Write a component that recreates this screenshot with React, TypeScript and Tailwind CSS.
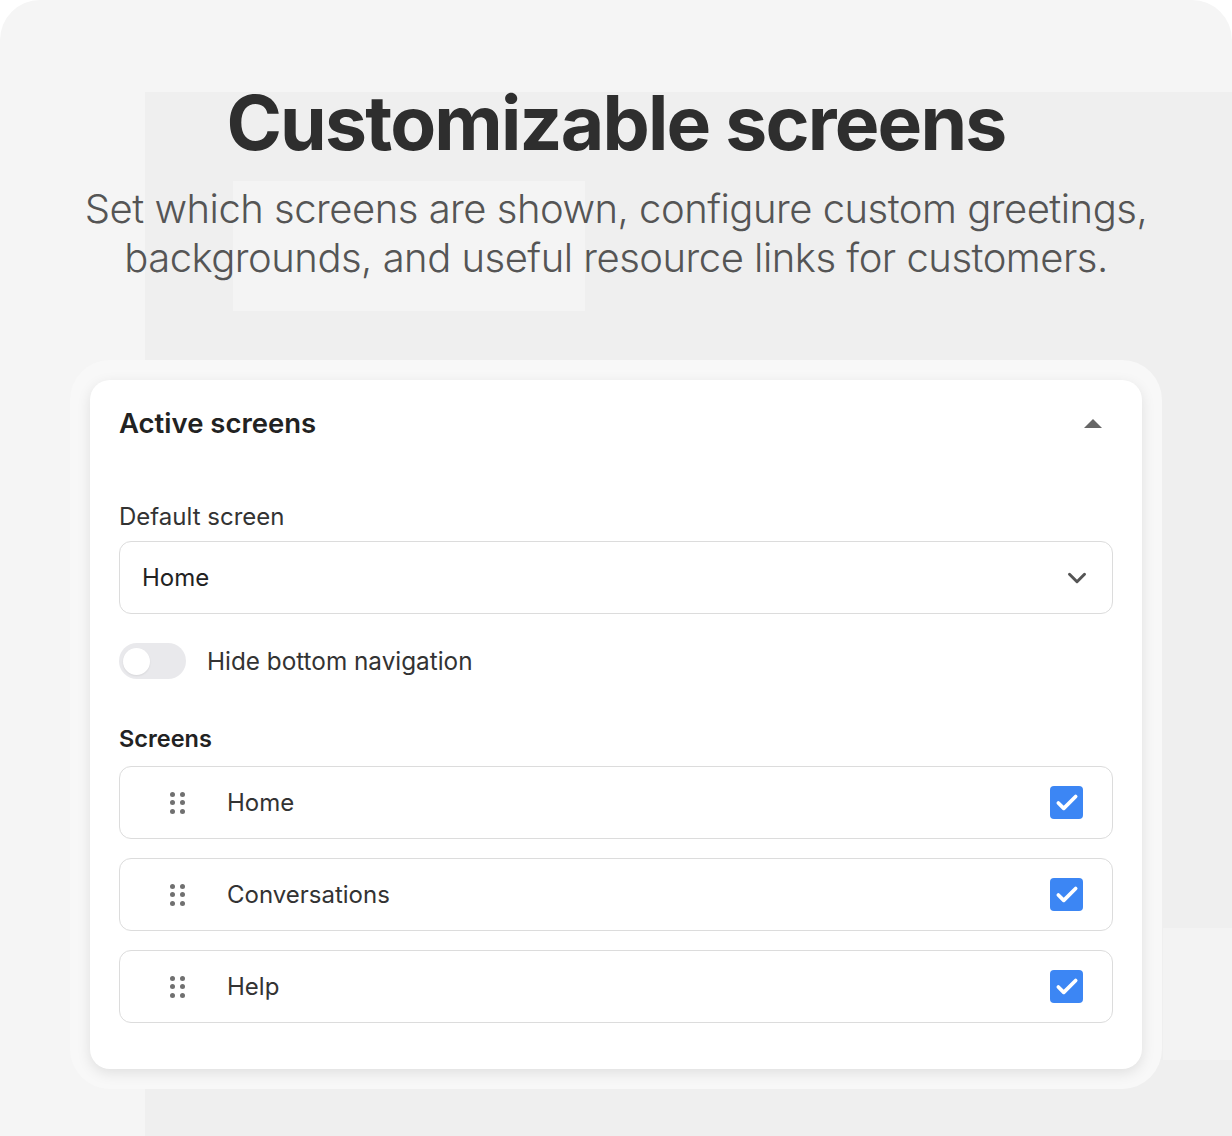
import { ChevronDown, Check } from "lucide-react";

const screens = ["Home", "Conversations", "Help"];

function DragHandle() {
    return (
        <div className="grid grid-cols-2 gap-x-[5px] gap-y-[3.5px]">
            {[0, 1, 2, 3, 4, 5].map((i) => (
                <span key={i} className="w-[5px] h-[5px] rounded-full bg-[#707070]" />
            ))}
        </div>
    );
}

export default function App() {
    return (
        <div className="w-[1232px] h-[1136px] bg-white font-['Inter',sans-serif]">
            <div className="relative w-full h-full rounded-t-[40px] bg-[#f5f5f5] overflow-hidden">
                {/* faint background blocks */}
                <div className="absolute left-[145px] top-[92px] right-0 bottom-0 bg-[#efefef]" />
                <div className="absolute left-[233px] top-[181px] w-[352px] h-[130px] bg-[#f4f4f4]" />
                <div className="absolute left-[1163px] top-[928px] right-0 h-[132px] bg-[#f3f3f3]" />

                <div className="relative flex flex-col items-center pt-[79px]">
                    <h1 className="text-[75px] leading-[88px] font-bold tracking-[-1.8px] text-[#2e2e2e]">
                        Customizable screens
                    </h1>
                    <p className="mt-[17px] text-center text-[40px] leading-[49px] font-light tracking-[-0.5px] text-[#555555]">
                        Set which screens are shown, configure custom greetings,
                        <br />
                        backgrounds, and useful resource links for customers.
                    </p>

                    {/* card with soft halo */}
                    <div className="mt-[78px] w-[1092px] p-[20px] rounded-[40px] bg-[#f8f8f8]">
                        <div className="bg-white rounded-[20px] shadow-[0_4px_14px_rgba(0,0,0,0.10)] px-[29px] pt-[24px] pb-[46px]">
                            <div className="flex items-center justify-between">
                                <h2 className="text-[27.5px] leading-[38px] font-semibold text-[#222222]">
                                    Active screens
                                </h2>
                                <div className="mr-[11px] w-0 h-0 border-l-[9px] border-r-[9px] border-b-[9px] border-l-transparent border-r-transparent border-b-[#666666]" />
                            </div>

                            <div className="mt-[60px] text-[24px] leading-[30px] text-[#333333]">Default screen</div>
                            <div className="mt-[9px] h-[73px] flex items-center justify-between pl-[22px] pr-[20px] border-[1.5px] border-[#dcdcdc] rounded-[12px]">
                                <span className="text-[24px] text-[#222222]">Home</span>
                                <ChevronDown className="w-[30px] h-[30px] text-[#555555]" strokeWidth={2.4} />
                            </div>

                            <div className="mt-[29px] flex items-center gap-[21px]">
                                <div className="w-[67px] h-[36px] rounded-full bg-[#e9e9ec] flex items-center px-[4px]">
                                    <span className="w-[27px] h-[27px] rounded-full bg-white shadow-[0_1px_2px_rgba(0,0,0,0.08)]" />
                                </div>
                                <span className="text-[24.3px] text-[#333333]">Hide bottom navigation</span>
                            </div>

                            <div className="mt-[45px] text-[23.5px] leading-[30px] font-semibold text-[#222222]">Screens</div>
                            <ul className="mt-[12px] flex flex-col gap-[19px]">
                                {screens.map((s) => (
                                    <li
                                        key={s}
                                        className="h-[73px] flex items-center border-[1.5px] border-[#dcdcdc] rounded-[12px] pl-[50px] pr-[29px]"
                                    >
                                        <DragHandle />
                                        <span className="ml-[42px] text-[24px] text-[#333333]">{s}</span>
                                        <span className="ml-auto w-[33px] h-[33px] rounded-[4px] bg-[#3c86f4] flex items-center justify-center">
                                            <Check className="w-[26px] h-[26px] text-white" strokeWidth={3.4} />
                                        </span>
                                    </li>
                                ))}
                            </ul>
                        </div>
                    </div>
                </div>
            </div>
        </div>
    );
}
